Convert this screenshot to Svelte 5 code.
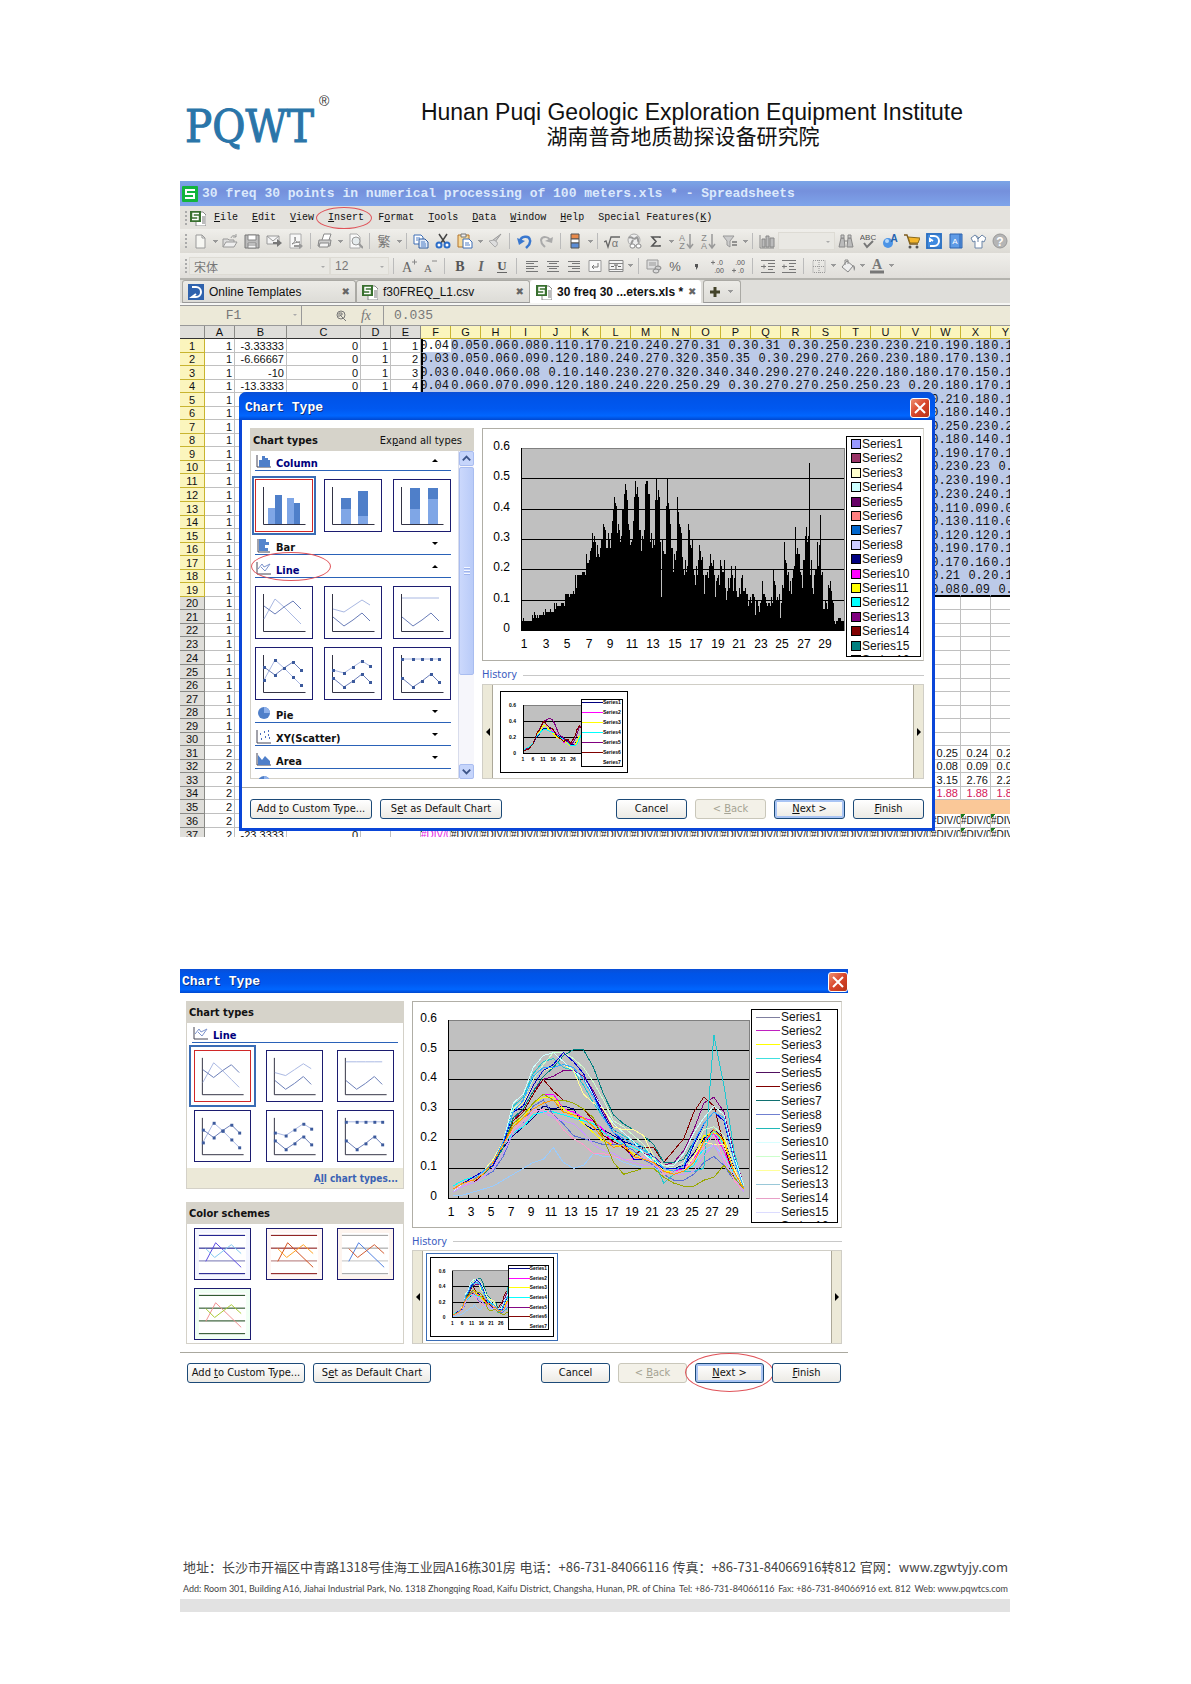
<script lang="ts">
  type ThumbKind = 'line' | 'stacked' | 'full';
  type Point = [number, number];

  const menus = [
    ['', 'F', 'ile'],
    ['', 'E', 'dit'],
    ['', 'V', 'iew'],
    ['', 'I', 'nsert'],
    ['F', 'o', 'rmat'],
    ['', 'T', 'ools'],
    ['', 'D', 'ata'],
    ['', 'W', 'indow'],
    ['', 'H', 'elp'],
    ['Special Features(', 'K', ')']
  ];

  // 'sep' draws a divider, 'drop' a small arrow, 'combo' an empty drop-down
  const standardBar = [
    'new', 'drop', 'open', 'save', 'mail', 'pdf', 'sep', 'print', 'drop', 'preview', 'sep',
    'convert', 'drop', 'sep', 'copy', 'cut', 'paste', 'drop', 'brush', 'sep', 'undo', 'redo', 'sep',
    'split', 'drop', 'sep', 'root', 'globe', 'sum', 'drop', 'asc', 'desc', 'filter', 'drop', 'sep',
    'chart', 'combo', 'find', 'spell', 'ball', 'cart', 'docer', 'book', 'shirt', 'help'
  ];
  const formatBar = [
    'sep', 'grow', 'shrink', 'sep', 'bold', 'italic', 'underline', 'sep',
    'left', 'center', 'right', 'wrap', 'merge', 'drop', 'sep',
    'currency', 'percent', 'comma', 'incdec', 'decdec', 'sep', 'outdent', 'indent', 'sep',
    'borders', 'drop', 'fill', 'drop', 'color', 'drop'
  ];

  const icons: Record<string, string> = {
    new: '<path d="M4 2h6l3 3v10H4z" fill="#f6f6f2" stroke="#999"/><path d="M10 2v3h3" fill="none" stroke="#999"/>',
    open: '<path d="M1 14V6h5l1 1h5v2" fill="#ddd" stroke="#999"/><path d="M1 14l3-5h11l-3 5z" fill="#eee" stroke="#999"/><path d="M9 5c1-3 4-3 5-1m0-3v3h-3" fill="none" stroke="#999"/>',
    save: '<path d="M1 2h14v13H1z" fill="#bbb" stroke="#777"/><path d="M4 2h8v5H4z" fill="#fff" stroke="#888"/><path d="M4 10h8v5H4zM4 12h8" fill="#f4f4f4" stroke="#888"/>',
    mail: '<path d="M1 3h12v8H1z" fill="#f4f4f4" stroke="#999"/><path d="M1 3l6 5 6-5" fill="none" stroke="#999"/><path d="M7 9h4V6l5 4-5 4v-3H7z" fill="#777"/>',
    pdf: '<path d="M2 1h11v14H2z" fill="#f8f8f8" stroke="#aaa"/><path d="M4 11c3-2 4-5 3-7-1 4 2 6 5 5-3 0-6 1-8 2z" fill="none" stroke="#888"/><path d="M6 12h5v-2l4 3-4 3v-2H6z" fill="#999"/>',
    print: '<path d="M5 7l2-6h7l-2 6" fill="#fff" stroke="#888"/><path d="M2 7h12l-1 6H1z" fill="#ccc" stroke="#888"/><path d="M3 10h9l-1 4H2z" fill="#f4f4f4" stroke="#888"/>',
    preview: '<path d="M3 1h7l3 3v11H3z" fill="#fafafa" stroke="#aaa"/><circle cx="9" cy="8" r="4" fill="#e6ecee" stroke="#999"/><path d="M12 11l4 4" stroke="#999" stroke-width="2"/>',
    convert: '<text x="8" y="13" font-size="13" fill="#777" text-anchor="middle">繁</text>',
    copy: '<path d="M1 2h7l2 2v7H1z" fill="#fff" stroke="#3f6fb5"/><path d="M6 6h6l3 3v6H6z" fill="#dfe9f8" stroke="#2f5ca0"/><path d="M8 9h4M8 11h5M8 13h5M3 5h4M3 7h2" stroke="#4f7fc5"/>',
    cut: '<path d="M4 1l6 9M12 1L6 10" stroke="#444" stroke-width="1.5"/><circle cx="4" cy="12" r="2.500" fill="#fff" stroke="#2c6dc8" stroke-width="2"/><circle cx="12" cy="12" r="2.500" fill="#fff" stroke="#2c6dc8" stroke-width="2"/>',
    paste: '<path d="M1 2h11v12H1z" fill="#f6d99a" stroke="#b3742a"/><path d="M4 1h5v3H4z" fill="#eee" stroke="#777"/><path d="M6 6h6l3 3v6H6z" fill="#fff" stroke="#3f6fb5"/><path d="M8 10h4M8 12h5" stroke="#4f7fc5"/>',
    brush: '<path d="M14 1l-6 8-2-2z" fill="#ccc" stroke="#999"/><path d="M2 8l6 6c2-1 3-3 2-5L7 7z" fill="#ddd" stroke="#aaa"/>',
    undo: '<path d="M4 8c1-5 9-6 10-1 1 4-2 6-4 8" fill="none" stroke="#3a78cf" stroke-width="2.500"/><path d="M1 5l8 3-6 4z" fill="#3a78cf"/>',
    redo: '<path d="M12 8C11 3 4 3 3 7c0 4 2 5 4 7" fill="none" stroke="#aaa" stroke-width="2"/><path d="M15 4l-8 4 7 2z" fill="#aaa"/>',
    split: '<path d="M4 1h8v5H4z" fill="#e88a4a" stroke="#555"/><path d="M4 6h8v4H4z" fill="#fff" stroke="#555"/><path d="M4 10h8v5H4z" fill="#5d8ed6" stroke="#555"/>',
    root: '<path d="M0 9l2-1 2 6 3-10h9" fill="none" stroke="#666" stroke-width="1.300"/><text x="11" y="14" font-size="11" fill="#777" text-anchor="middle">α</text>',
    globe: '<circle cx="8" cy="7" r="6" fill="#eee" stroke="#aaa"/><path d="M3 5c3-3 4 3 7 0s1 4 3 4M5 11l2-4" fill="none" stroke="#999" stroke-width="2"/><rect x="4" y="11" width="5" height="4" rx="2" fill="#fff" stroke="#888"/><rect x="10" y="11" width="5" height="4" rx="2" fill="#fff" stroke="#888"/>',
    sum: '<path d="M12 5V4H4l4 4.500L4 13h8v-1" fill="none" stroke="#555" stroke-width="1.600"/>',
    asc: '<text x="4" y="8" font-size="9" fill="#888" text-anchor="middle">A</text><text x="4" y="16" font-size="9" fill="#888" text-anchor="middle">Z</text><path d="M12 1v13M9 11l3 4 3-4" fill="none" stroke="#999" stroke-width="1.500"/>',
    desc: '<text x="4" y="8" font-size="9" fill="#888" text-anchor="middle">Z</text><text x="4" y="16" font-size="9" fill="#888" text-anchor="middle">A</text><path d="M12 1v13M9 11l3 4 3-4" fill="none" stroke="#999" stroke-width="1.500"/>',
    filter: '<path d="M1 3h11L8 8v6l-3-2V8z" fill="#ccc" stroke="#999"/><path d="M10 9h5M10 12h5" stroke="#777" stroke-width="1.500"/>',
    chart: '<path d="M1 2v13h14" fill="none" stroke="#888"/><path d="M3 6h3v8H3zM7 3h3v11H7zM11 5h4v9h-4z" fill="#bbb" stroke="#888"/>',
    find: '<path d="M3 5h3l1 9H1zM10 5h3l2 9H9z" fill="#bbb" stroke="#888"/><path d="M3 2h3v3H3zM10 2h3v3h-3zM6 8h4" fill="#ccc" stroke="#888"/>',
    spell: '<text x="8" y="7" font-size="8" fill="#555" text-anchor="middle">ABC</text><path d="M4 10l3 4 6-6" fill="none" stroke="#777" stroke-width="2"/>',
    ball: '<circle cx="6" cy="10" r="5" fill="#4c94e6"/><circle cx="5" cy="8" r="2" fill="#b6d8fb"/><text x="12" y="9" font-size="10" font-weight="bold" fill="#2563b0" text-anchor="middle">A</text>',
    cart: '<path d="M0 2h3l3 9h8" fill="none" stroke="#7c5a1c" stroke-width="1.300"/><path d="M4 4l12 1-2 5H6z" fill="#f4b62c" stroke="#8a6a1c"/><circle cx="6" cy="14" r="1.500" fill="#555"/><circle cx="13" cy="14" r="1.500" fill="#555"/>',
    docer: '<rect x="0" y="0" width="16" height="16" fill="#3f8ae0"/><rect x="1" y="1" width="14" height="14" fill="none" stroke="#2a62a8"/><path d="M4 3h4a5 5 0 0 1 0 10H4M4 9V6l3 2" fill="none" stroke="#fff" stroke-width="2"/>',
    book: '<path d="M2 1h12v14H2z" fill="#5f9be6" stroke="#2d62ae"/><path d="M12 1v14" stroke="#2d62ae"/><text x="7" y="11" font-size="8" fill="#fff" text-anchor="middle">A</text>',
    shirt: '<path d="M5 2L1 5l2 4 2-1v7h7V8l2 1 2-4-4-3-3 3z" fill="#fff" stroke="#6c86a8"/><path d="M8 5v4M6 3l2 3 3-3" fill="none" stroke="#6c86a8"/>',
    help: '<circle cx="8" cy="8" r="7" fill="#b5b5b5" stroke="#999"/><text x="8" y="13" font-size="12" font-weight="bold" fill="#fff" text-anchor="middle">?</text>',
    grow: '<text x="6" y="14" font-size="14" class="serif" fill="#666" text-anchor="middle">A</text><path d="M11 4h5M13.500 1.500v5" stroke="#888"/>',
    shrink: '<text x="6" y="14" font-size="11" class="serif" fill="#666" text-anchor="middle">A</text><path d="M10 3h5" stroke="#888"/>',
    bold: '<text x="8" y="13" font-size="14" font-weight="bold" class="serif" fill="#555" text-anchor="middle">B</text>',
    italic: '<text x="8" y="13" font-size="14" font-style="italic" font-weight="bold" class="serif" fill="#666" text-anchor="middle">I</text>',
    underline: '<text x="8" y="12" font-size="13" font-weight="bold" class="serif" fill="#555" text-anchor="middle">U</text><path d="M3 14.500h10" stroke="#666"/>',
    left: '<path d="M2 3.500h12M2 5.500h8M2 8.500h12M2 10.500h8M2 13.500h12" stroke="#777"/>',
    center: '<path d="M2 3.500h12M4 5.500h8M2 8.500h12M4 10.500h8M2 13.500h12" stroke="#777"/>',
    right: '<path d="M2 3.500h12M6 5.500h8M2 8.500h12M6 10.500h8M2 13.500h12" stroke="#777"/>',
    wrap: '<path d="M2 2.500h12v11H2z" fill="#f8f8f8" stroke="#999"/><path d="M11 5v4H5m2-2L5 9l2 2" fill="none" stroke="#777"/>',
    merge: '<path d="M1 2.500h14v11H1zM1 5.500h14M1 11.500h14" fill="#f4f4f4" stroke="#888"/><path d="M3 8.500h3M10 8.500h3M6 7h4M8 7v4" stroke="#666"/>',
    currency: '<path d="M1 2h11v9H1z" fill="#ddd" stroke="#999"/><path d="M3 5h7M3 7h7" stroke="#999"/><ellipse cx="12" cy="10" rx="3" ry="2" fill="#ccc" stroke="#888"/><ellipse cx="10" cy="13" rx="3" ry="2" fill="#ddd" stroke="#888"/>',
    percent: '<text x="8" y="13" font-size="13" fill="#666" text-anchor="middle">%</text>',
    comma: '<path d="M7 6h3v3l-2 3v-3H7z" fill="#555"/>',
    incdec: '<text x="11" y="7" font-size="7" fill="#555" text-anchor="middle">.0</text><text x="10" y="15" font-size="7" fill="#555" text-anchor="middle">.00</text><path d="M2 4.500h4M4 2.500v4" stroke="#777"/>',
    decdec: '<text x="10" y="7" font-size="7" fill="#555" text-anchor="middle">.00</text><text x="11" y="15" font-size="7" fill="#555" text-anchor="middle">.0</text><path d="M2 12.500h4M4 10.500v4" stroke="#777"/>',
    outdent: '<path d="M1 2.500h14M8 5.500h7M8 8.500h7M8 11.500h5M1 14.500h14M1 8.500h5M4 6.500v4" stroke="#777"/>',
    indent: '<path d="M1 2.500h14M8 5.500h7M8 8.500h5M8 11.500h7M1 14.500h14M1 8.500h5M3 6.500v4" stroke="#777"/>',
    borders: '<path d="M2 2.500h12v12H2zM8 2v13M2 8.500h12" fill="none" stroke="#999" stroke-dasharray="1 1"/>',
    fill: '<path d="M7 3l6 5-5 6-6-5z" fill="#eee" stroke="#888"/><path d="M5 7V2h3v4" fill="none" stroke="#888"/><path d="M13 7c3 1 2 5 1 6z" fill="#888"/>',
    color: '<text x="8" y="11" font-size="14" font-weight="bold" class="serif" fill="#777" text-anchor="middle">A</text><path d="M1 14h14" stroke="#777" stroke-width="3"/>',
    sheet: '<path d="M6 2h7l3 3v11H6z" fill="#fff" stroke="#888"/><path d="M12 7h3M12 9h3M12 11h3M12 13h3" stroke="#777"/><rect x="0" y="1" width="11" height="11" fill="#39702f"/><path d="M9 3.500H3v3h5v3H2" fill="none" stroke="#fff" stroke-width="1.500"/>',
    template: '<rect width="16" height="16" fill="#2f62ad"/><path d="M4 3h4a5 5 0 0 1 0 10H4l4-3" fill="none" stroke="#fff" stroke-width="2"/>',
    column: '<path d="M1 1v12h14" fill="none" stroke="#445"/><path d="M3 6h3v7H3zM6 2h3v11H6zM9 4h3v9H9zM12 6h2v7h-2z" fill="#4f7fc9"/>',
    bar: '<path d="M2 1v13h12" fill="none" stroke="#445"/><path d="M3 1h7v3H3zM3 4h10v3H3zM3 7h6v3H3zM3 10h9v3H3z" fill="#5585cc"/>',
    line: '<path d="M1 1v12h14" fill="none" stroke="#445"/><path d="M2 8l4-5 2 3 6-3-5 7-4-4" fill="none" stroke="#7c93cc"/>',
    pie: '<circle cx="8" cy="7" r="6" fill="#4f7fc9"/><path d="M8 7V1a6 6 0 0 1 6 6z" fill="#8fb2ec"/>',
    scatter: '<path d="M1 1v13h14" fill="none" stroke="#445"/><path d="M4 5h1M8 3h1M12 2h1M5 10h1M9 8h1M13 9h1M12 6h1" stroke="#4f6fc0" stroke-width="2"/>',
    area: '<path d="M1 1v12h14" fill="none" stroke="#445"/><path d="M2 13V3l4 5 3-4 5 5v4z" fill="#4f7fc9"/>'
  };

  const letters = 'FGHIJKLMNOPQRSTUVWXY'.split('');
  const topRows = [
    '.04 .05 .06 .08 .11 .17 .21 .24 .27 .31 .3 .31 .3 .25 .23 .23 .21 .19 .18 .17',
    '.03 .05 .06 .09 .12 .18 .24 .27 .32 .35 .35 .3 .29 .27 .26 .23 .18 .17 .13 .12',
    '.03 .04 .06 .08 .1 .14 .23 .27 .32 .34 .34 .29 .27 .24 .22 .18 .18 .17 .15 .14',
    '.04 .06 .07 .09 .12 .18 .24 .22 .25 .29 .3 .27 .27 .25 .25 .23 .2 .18 .17 .16'
  ];
  const sideCells = [
    '.21 .18 .15', '.18 .14 .12', '.25 .23 .21', '.18 .14 .12', '.19 .17 .14', '.23 .23 .2', '.23 .19 .17',
    '.23 .24 .19', '.11 .09 .08', '.13 .11 .09', '.12 .12 .11', '.19 .17 .15', '.17 .16 .13', '.21 .2 .17', '.08 .09 .1'
  ];
  const stats = ['0.25 0.24 0.23', '0.08 0.09 0.08', '3.15 2.76 2.21', '1.88 1.88 1.88'];
  const bValues = ['-3.33333', '-6.66667', '-10', '-13.3333'];

  function rowCells(n: number): string[] {
    if (n <= 4) return topRows[n - 1].split(' ').map((v) => '0' + v);
    const blank = Array(17).fill('');
    if (n === 36) return [...blank, ...Array(3).fill('#DIV/0')];
    if (n === 37) return letters.map(() => '#DIV/0');
    if (n <= 19) return [...blank, ...sideCells[n - 5].split(' ').map((v) => '0' + v)];
    if (n >= 31 && n <= 34) return [...blank, ...stats[n - 31].split(' ')];
    return Array(20).fill('');
  }

  const rows = Array.from({ length: 37 }, (_, i) => {
    const n = i + 1;
    return {
      n,
      a: n > 30 ? '2' : '1',
      b: n <= 4 ? bValues[i] : n === 37 ? '-23.3333' : '',
      c: n <= 4 || n === 37 ? '0' : '',
      d: n <= 4 ? '1' : '',
      e: n <= 4 ? String(n) : '',
      cells: rowCells(n)
    };
  });

  // values are hundredths
  const series = [
    { color: '#000080', v: [3, 5, 6, 8, 11, 17, 21, 24, 27, 31, 30, 31, 30, 25, 23, 23, 21, 19, 18, 17, 14, 11, 10, 11, 15, 20, 23, 20, 10, 3] },
    { color: '#ff00ff', v: [3, 5, 6, 9, 12, 18, 25, 27, 32, 35, 35, 30, 29, 27, 26, 23, 18, 18, 13, 13, 12, 10, 9, 10, 13, 19, 22, 16, 8, 3] },
    { color: '#ffff00', v: [3, 4, 6, 8, 12, 18, 25, 27, 32, 34, 34, 30, 28, 25, 22, 19, 18, 17, 15, 13, 12, 9, 9, 9, 14, 21, 22, 20, 9, 3] },
    { color: '#00ffff', v: [4, 6, 7, 9, 12, 18, 22, 24, 28, 29, 29, 28, 27, 26, 25, 22, 20, 18, 17, 15, 13, 10, 9, 9, 11, 17, 23, 18, 8, 3] },
    { color: '#800080', v: [3, 5, 6, 8, 11, 18, 26, 30, 36, 40, 41, 43, 43, 41, 36, 29, 23, 21, 19, 15, 14, 11, 12, 16, 23, 32, 34, 29, 15, 4] },
    { color: '#800000', v: [3, 4, 5, 8, 11, 18, 26, 29, 35, 40, 36, 33, 32, 30, 26, 21, 19, 17, 14, 17, 17, 12, 16, 20, 29, 34, 31, 18, 7, 2] },
    { color: '#008080', v: [3, 5, 6, 8, 11, 17, 27, 30, 36, 41, 44, 48, 50, 50, 44, 35, 28, 25, 23, 21, 18, 12, 12, 13, 19, 25, 29, 26, 14, 4] },
    { color: '#5a6fd8', v: [2, 4, 5, 7, 9, 14, 22, 25, 31, 33, 28, 25, 21, 20, 19, 18, 18, 18, 16, 13, 11, 8, 6, 6, 8, 12, 14, 11, 6, 2] },
    { color: '#20c8d0', v: [3, 5, 7, 9, 12, 19, 31, 34, 42, 46, 47, 44, 43, 38, 32, 27, 23, 21, 19, 17, 13, 5, 8, 9, 9, 10, 55, 38, 16, 3] },
    { color: '#ccffff', v: [2, 5, 6, 8, 12, 19, 32, 35, 44, 48, 49, 46, 43, 40, 35, 30, 25, 22, 19, 15, 12, 11, 11, 15, 22, 27, 31, 28, 14, 4] },
    { color: '#ccffcc', v: [3, 4, 6, 8, 12, 18, 30, 33, 40, 45, 49, 49, 47, 44, 39, 33, 26, 24, 21, 18, 13, 11, 10, 12, 17, 23, 24, 21, 12, 4] },
    { color: '#ffff99', v: [3, 5, 6, 9, 13, 19, 29, 32, 38, 43, 44, 45, 43, 35, 32, 30, 24, 23, 23, 21, 14, 9, 8, 9, 14, 19, 18, 18, 10, 3] },
    { color: '#99ccff', v: [1, 1, 2, 3, 4, 6, 8, 10, 12, 13, 17, 12, 10, 11, 15, 14, 14, 12, 11, 10, 10, 9, 8, 9, 12, 16, 18, 14, 8, 3] },
    { color: '#ff99cc', v: [3, 4, 6, 8, 12, 18, 23, 26, 29, 30, 28, 23, 20, 18, 15, 15, 14, 13, 13, 14, 12, 8, 9, 9, 13, 17, 21, 13, 6, 2] },
    { color: '#cc99ff', v: [2, 4, 5, 7, 10, 15, 22, 25, 30, 29, 27, 26, 25, 22, 18, 16, 15, 13, 12, 11, 11, 9, 8, 8, 9, 14, 18, 12, 7, 2] },
    { color: '#99a800', v: [3, 5, 6, 9, 12, 18, 25, 28, 32, 35, 33, 33, 32, 30, 27, 20, 12, 8, 9, 10, 10, 7, 5, 4, 4, 6, 7, 11, 7, 3] },
    { color: '#0000d0', v: [3, 5, 7, 9, 11, 18, 29, 31, 38, 43, 45, 49, 46, 42, 35, 28, 22, 19, 13, 13, 12, 10, 10, 10, 18, 25, 29, 26, 13, 3] },
    { color: '#33aaff', v: [3, 5, 6, 9, 12, 19, 29, 33, 41, 44, 44, 45, 44, 40, 34, 27, 22, 20, 18, 16, 14, 10, 9, 11, 19, 25, 29, 27, 13, 3] },
    { color: '#ff9900', v: [3, 5, 6, 8, 12, 18, 24, 27, 30, 32, 33, 29, 28, 27, 24, 20, 17, 18, 14, 13, 12, 9, 8, 9, 12, 19, 23, 19, 9, 3] }
  ];

  const legendColors = [
    '#9999ff', '#993366', '#ffffcc', '#ccffff', '#660066', '#ff8080', '#0066cc', '#ccccff',
    '#000080', '#ff00ff', '#ffff00', '#00ffff', '#800080', '#800000', '#008080', '#0000ff'
  ];
  const lineColors = [
    '#7f7f9f', '#c020c0', '#ffff00', '#40e0e0', '#501060', '#800000', '#107070', '#7080d0',
    '#20b8b8', '#d8ffff', '#ccffcc', '#ffff99', '#99c8d8', '#e8a0c8', '#dcdcff', '#ffcc99'
  ];

  const ticks = [6, 5, 4, 3, 2, 1, 0];
  const odd = Array.from({ length: 15 }, (_, i) => i * 2 + 1);

  function polyline(v: number[], x: number, y: number, w: number, h: number) {
    return v.map((n, i) => `${x + ((i + 0.5) * w) / v.length},${y + h - (n / 60) * h}`).join(' ');
  }

  function columns(x: number, y: number, w: number, h: number) {
    const step = w / 30;
    const bar = step / series.length;
    // lowest series first, so that each cluster climbs to one peak
    const order = [12, 15, 7, 14, 3, 0, 13, 2, 5, 4, 6, 10, 9, 16, 8, 17, 11, 1, 18];
    let d = '';
    for (let c = 0; c < 30; c++) {
      order.forEach((s, k) => {
        const left = x + c * step + k * bar;
        d += `M${left} ${y + h}V${y + h - (series[s].v[c] / 60) * h}h1V${y + h}z`;
      });
    }
    return d;
  }

  const upper: Record<ThumbKind, Point[]> = {
    line: [[8, 32], [19, 12], [28, 20], [37, 29], [45, 37]],
    stacked: [[8, 22], [19, 25], [28, 19], [37, 13], [45, 18]],
    full: [[8, 11], [19, 11], [28, 11], [37, 11], [45, 11]]
  };
  const lower: Record<ThumbKind, Point[]> = {
    line: [[8, 19], [19, 27], [28, 20], [37, 14], [45, 22]],
    stacked: [[8, 30], [19, 39], [28, 33], [37, 26], [45, 34]],
    full: [[8, 30], [19, 39], [28, 33], [37, 26], [45, 34]]
  };
  const kinds: ThumbKind[] = ['line', 'stacked', 'full'];

  const schemes = [
    { name: 'Blue', grid: ['#000080', '#000080', '#7070b0', '#000080'], a: '#5a4ae0', b: '#80c8f0', bg: '#f4f6ff' },
    { name: 'Red', grid: ['#800000', '#800000', '#b07070', '#800000'], a: '#d05020', b: '#ffa020', bg: '#fff6f4' },
    { name: 'Gray', grid: ['#999999', '#999999', '#c0c0c0', '#999999'], a: '#5080e0', b: '#d05a30', bg: '#fdf4ee' },
    { name: 'Green', grid: ['#104010', '#104010', '#104010', '#104010'], a: '#f09090', b: '#a8c830', bg: '#f0fff4' }
  ];
</script>

{#snippet icon(name: string)}
  <svg class="icon" viewBox="0 0 16 16" aria-hidden="true">{@html icons[name]}</svg>
{/snippet}

{#snippet tools(items: string[])}
  {#each items as item}
    {#if item === 'sep'}
      <span class="sep"></span>
    {:else if item === 'drop'}
      <span class="drop"></span>
    {:else if item === 'combo'}
      <span class="pick zoom"><select aria-label="Zoom"><option></option></select></span>
    {:else}
      <button class="tool" aria-label={item}>{@render icon(item)}</button>
    {/if}
  {/each}
{/snippet}

{#snippet lineThumb(kind: ThumbKind, markers: boolean, selected: boolean)}
  <button class="thumb" class:selected aria-label={kind}>
    <svg viewBox="0 0 56 51">
      <path d="M7.500 7v37.500h42" fill="none" stroke="#334" />
      <polyline points={upper[kind].join(' ')} fill="none" stroke="#a9b8e2" />
      <polyline points={lower[kind].join(' ')} fill="none" stroke="#6a7db8" />
      {#if markers}
        {#each [...upper[kind], ...lower[kind]] as [x, y]}
          <rect x={x - 1} y={y - 1} width="3" height="3" fill="#3c5a9c" />
        {/each}
      {/if}
    </svg>
  </button>
{/snippet}

{#snippet category(name: string, glyph: string, open: boolean, circled: boolean)}
  <h3 class="category" class:open>
    {@render icon(glyph)}
    <span>{name}</span>
    <i class="caret" class:up={open}></i>
    {#if circled}<span class="ring ring-line"></span>{/if}
  </h3>
{/snippet}

{#snippet titleBar()}
  <header class="dialog-title">
    <h2>Chart Type</h2>
    <button class="close" aria-label="Close">
      <svg viewBox="0 0 18 18"><path d="M4 4l10 10M14 4L4 14" stroke="#fff" stroke-width="2" /></svg>
    </button>
  </header>
{/snippet}

{#snippet legend(colors: string[], swatch: boolean)}
  <ul class="legend" class:lines={!swatch}>
    {#each colors as color, i}
      <li><i style="background: {color}"></i>Series{i + 1}</li>
    {/each}
  </ul>
{/snippet}

{#snippet axes(x: number, y: number, w: number, h: number)}
  <rect {x} {y} width={w} height={h} fill="#c0c0c0" stroke="#808080" />
  {#each ticks as t}
    <path d="M{x} {y + h - Math.round((t * h) / 6)}h{w}" stroke={t === 6 ? '#808080' : '#000'} />
    <text x={x - 11} y={y + h + 2 - Math.round((t * h) / 6)} text-anchor="end">{t ? `0.${t}` : '0'}</text>
  {/each}
  {#each odd as n}
    <text x={x + Math.round(((n - 1) * w) / 30) + 3} y={y + h + 18} text-anchor="middle">{n}</text>
  {/each}
  <path d="M{x} {y}v{h}" stroke="#000" />
{/snippet}

{#snippet miniChart(count: number)}
  <svg class="mini" viewBox="0 0 126 80" aria-hidden="true">
    <rect x="22" y="13" width="58" height="48" fill="#c0c0c0" stroke="#808080" />
    <path d="M22 29.500h58M22 45.500h58M22 61.500h58M22.500 13v48" stroke="#000" />
    {#each series.slice(0, count) as s}
      <polyline points={polyline(s.v, 22, 13, 66, 48)} fill="none" stroke={s.color} />
    {/each}
    {#each [6, 4, 2, 0] as t, i}
      <text x="15" y={15 + i * 16} text-anchor="end">{t ? `0.${t}` : '0'}</text>
    {/each}
    {#each [1, 6, 11, 16, 21, 26] as n, i}
      <text x={22 + i * 10} y="69" text-anchor="middle">{n}</text>
    {/each}
    <rect x="80" y="7" width="41" height="67" fill="#fff" stroke="#000" />
    {#each lineColors.slice(0, 7) as _, i}
      {#if i < 6}<path d="M81 {10.5 + i * 10}h21" stroke={series[i].color} />{/if}
      <text x="102" y={12 + i * 10}>Series{i + 1}</text>
    {/each}
  </svg>
{/snippet}

{#snippet history(framed: boolean, count: number)}
  <div class="history-label">History</div>
  <div class="history">
    <button class="scroll prev" aria-label="Previous"></button>
    <div class="history-item" class:framed>{@render miniChart(count)}</div>
    <button class="scroll next" aria-label="Next"></button>
  </div>
{/snippet}

{#snippet actions(circled: boolean)}
  <footer class="actions">
    <button class="push wide">Add <u>t</u>o Custom Type...</button>
    <button class="push wide">S<u>e</u>t as Default Chart</button>
    <span class="spacer"></span>
    <button class="push">Cancel</button>
    <button class="push" disabled>&lt; <u>B</u>ack</button>
    <button class="push default">
      <u>N</u>ext &gt;{#if circled}<span class="ring ring-next"></span>{/if}
    </button>
    <button class="push"><u>F</u>inish</button>
  </footer>
{/snippet}

<div class="page">
  <header class="letterhead">
    <div class="logo">PQWT<sup>®</sup></div>
    <div class="institute">
      <h1>Hunan Puqi Geologic Exploration Equipment Institute</h1>
      <p lang="zh">湖南普奇地质勘探设备研究院</p>
    </div>
  </header>

  <section class="spreadsheet">
    <div class="titlebar">
      <svg class="app" viewBox="0 0 16 16" aria-hidden="true">
        <rect width="16" height="16" rx="1" fill="#12b53c" />
        <path d="M13 4H4v4h8v4H3" fill="none" stroke="#fff" stroke-width="2" />
      </svg>
      <span>30 freq 30 points in numerical processing of 100 meters.xls * - Spreadsheets</span>
    </div>

    <nav class="menubar">
      <span class="grip"></span>
      {@render icon('sheet')}
      {#each menus as [before, key, after]}
        <button class="menu">
          {before}<u>{key}</u>{after}{#if after === 'nsert'}<span class="ring ring-menu"></span>{/if}
        </button>
      {/each}
    </nav>

    <div class="toolbar">
      <span class="grip"></span>
      {@render tools(standardBar)}
    </div>

    <div class="toolbar format">
      <span class="grip"></span>
      <span class="pick font"><select aria-label="Font"><option>宋体</option></select></span>
      <span class="pick size"><select aria-label="Font size"><option>12</option></select></span>
      {@render tools(formatBar)}
    </div>

    <div class="tabs">
      <button class="tab">{@render icon('template')}<span>Online Templates</span><b>✖</b></button>
      <button class="tab">{@render icon('sheet')}<span>f30FREQ_L1.csv</span><b>✖</b></button>
      <button class="tab active">{@render icon('sheet')}<span>30 freq 30 ...eters.xls *</span><b>✖</b></button>
      <button class="tab add" aria-label="New tab">
        <svg viewBox="0 0 12 12"><path d="M6 1v10M1 6h10" stroke="#44442a" stroke-width="3" /></svg>
        <i class="drop"></i>
      </button>
    </div>

    <div class="formula">
      <span class="pick name"><input aria-label="Cell" value="F1" /></span>
      <span class="fx">
        <svg viewBox="0 0 12 12" aria-hidden="true">
          <circle cx="6" cy="5" r="4" fill="none" stroke="#777" /><path d="M4 7V3h3v2H5l3 3 3 3" fill="none" stroke="#777" />
        </svg>
        <em>fx</em>
      </span>
      <input class="value" aria-label="Formula" value="0.035" />
    </div>

    <div class="grid">
      <table>
        <colgroup>
          <col class="w-head" /><col class="w-cell" /><col class="w-b" /><col class="w-c" />
          <col span="22" class="w-cell" />
        </colgroup>
        <thead>
          <tr>
            <th></th>
            {#each ['A', 'B', 'C', 'D', 'E'] as l}<th>{l}</th>{/each}
            {#each letters as l}<th class="hot">{l}</th>{/each}
          </tr>
        </thead>
        <tbody>
          {#each rows as row}
            <tr class:sel={row.n <= 19} class:last={row.n === 19} class:red={row.n === 34} class:orange={row.n === 35} class:err={row.n >= 36}>
              <th class:hot={row.n <= 19}>{row.n}</th>
              <td>{row.a}</td>
              <td>{row.b}</td>
              <td>{row.c}</td>
              <td>{row.d}</td>
              <td>{row.e}</td>
              {#each row.cells as cell}<td class="num">{cell}</td>{/each}
            </tr>
          {/each}
        </tbody>
      </table>
    </div>

    <section class="dialog floating">
      {@render titleBar()}
      <div class="body">
        <div class="panel">
          <div class="panel-head"><b>Chart types</b><span>Ex<u>p</u>and all types</span></div>
          <div class="scroller">
            <div class="list">
              {@render category('Column', 'column', true, false)}
              <div class="thumbs">
                <button class="thumb selected" aria-label="Clustered column">
                  <svg viewBox="0 0 56 51">
                    <path d="M12 28h7v16h-7zM31 18h7v26h-7z" fill="#7fa6e6" />
                    <path d="M19 15h7v29h-7zM38 23h6v21h-6z" fill="#4f7fc9" />
                    <path d="M7.500 7v37.500h42" fill="none" stroke="#334" />
                  </svg>
                </button>
                <button class="thumb" aria-label="Stacked column">
                  <svg viewBox="0 0 56 51">
                    <path d="M16 29h10v15H16zM33 36h10v8H33z" fill="#7fa6e6" />
                    <path d="M16 18h10v11H16zM33 11h10v25H33z" fill="#4f7fc9" />
                    <path d="M7.500 7v37.500h42" fill="none" stroke="#334" />
                  </svg>
                </button>
                <button class="thumb" aria-label="Full column">
                  <svg viewBox="0 0 56 51">
                    <path d="M16 29h10v15H16zM34 19h10v25H34z" fill="#7fa6e6" />
                    <path d="M16 8h10v21H16zM34 8h10v11H34z" fill="#4f7fc9" />
                    <path d="M7.500 7v37.500h42" fill="none" stroke="#334" />
                  </svg>
                </button>
              </div>
              {@render category('Bar', 'bar', false, false)}
              {@render category('Line', 'line', true, true)}
              <div class="thumbs">
                {#each kinds as kind}{@render lineThumb(kind, false, false)}{/each}
                {#each kinds as kind}{@render lineThumb(kind, true, false)}{/each}
              </div>
              {@render category('Pie', 'pie', false, false)}
              {@render category('XY(Scatter)', 'scatter', false, false)}
              {@render category('Area', 'area', false, false)}
              <div class="category">{@render icon('pie')}</div>
            </div>
            <div class="track">
              <button aria-label="Scroll up"><svg viewBox="0 0 14 14"><path d="M3 9l4-4 4 4" fill="none" stroke="#3c5488" stroke-width="2" /></svg></button>
              <span class="handle"></span>
              <button aria-label="Scroll down"><svg viewBox="0 0 14 14"><path d="M3 5l4 4 4-4" fill="none" stroke="#3c5488" stroke-width="2" /></svg></button>
            </div>
          </div>
        </div>

        <div class="right">
          <div class="preview">
            <svg class="plot" viewBox="0 0 363 231" aria-label="Column chart">
              {@render axes(38, 19, 323, 182)}
              <path d={columns(38, 19, 323, 182)} fill="#000" />
            </svg>
            {@render legend(legendColors, true)}
          </div>
          {@render history(false, 6)}
        </div>
      </div>
      {@render actions(false)}
    </section>
  </section>

  <section class="dialog docked">
    {@render titleBar()}
    <div class="body">
      <div class="stack">
        <div class="panel">
          <div class="panel-head"><b>Chart types</b></div>
          <div class="list">
            <h3 class="category">{@render icon('line')}<span class="blue">Line</span></h3>
            <div class="thumbs">
              {#each kinds as kind}{@render lineThumb(kind, false, kind === 'line')}{/each}
              {#each kinds as kind}{@render lineThumb(kind, true, false)}{/each}
            </div>
          </div>
          <div class="more"><a href="#all">A<u>l</u>l chart types...</a></div>
        </div>
        <div class="panel">
          <div class="panel-head"><b>Color schemes</b></div>
          <div class="list schemes">
            <div class="thumbs">
              {#each schemes as s}
                <button class="thumb" aria-label={s.name}>
                  <svg viewBox="0 0 56 51">
                    <rect width="56" height="51" fill={s.bg} />
                    <rect x="4" y="4" width="48" height="43" fill="#fff" />
                    {#each s.grid as g, i}<path d="M4 {6.5 + i * 13}h47" stroke={g} />{/each}
                    <polyline points="11,33 21,14 47,39" fill="none" stroke={s.a} />
                    <polyline points="11,20 20,29 37,16 47,25" fill="none" stroke={s.b} />
                  </svg>
                </button>
              {/each}
            </div>
          </div>
        </div>
      </div>

      <div class="right">
        <div class="preview">
          <svg class="plot" viewBox="0 0 338 225" aria-label="Line chart">
            {@render axes(35, 18, 301, 178)}
            {#each odd as n}<path d="M{25 + n * 10} 193v3M{35 + n * 10} 193v3" stroke="#000" />{/each}
            {#each series as s}
              <polyline points={polyline(s.v, 35, 18, 301, 178)} fill="none" stroke={s.color} />
            {/each}
          </svg>
          {@render legend(lineColors, false)}
        </div>
        {@render history(true, 19)}
      </div>
    </div>
    {@render actions(true)}
  </section>

  <footer class="contact">
    <p class="zh" lang="zh">
      <span>地址：长沙市开福区中青路1318号佳海工业园A16栋301房</span>
      <span>电话：+86-731-84066116</span>
      <span>传真：+86-731-84066916转812</span>
      <span>官网：www.zgwtyjy.com</span>
    </p>
    <p class="en">
      <span>Add: Room 301, Building A16, Jiahai Industrial Park, No. 1318 Zhongqing Road, Kaifu District, Changsha, Hunan, PR. of China</span>
      <span>Tel: +86-731-84066116</span>
      <span>Fax: +86-731-84066916 ext. 812</span>
      <span>Web: www.pqwtcs.com</span>
    </p>
    <div class="strip"></div>
  </footer>
</div>

<style>
  :global(body) {
    background: #fff;
    color: #111;
    font-family: 'Liberation Sans', 'Noto Sans CJK SC', sans-serif;
  }
  .page {
    box-sizing: border-box;
    max-width: 1191px;
    margin: 0 auto;
    padding: 92px 181px 72px 180px;
  }
  .page :global(*) {
    box-sizing: border-box;
  }
  h1, h2, h3, p, ul {
    margin: 0;
    padding: 0;
  }
  button, input, select {
    margin: 0;
    padding: 0;
    border: 0;
    border-radius: 0;
    background: none;
    color: inherit;
    font: inherit;
    appearance: none;
  }
  svg {
    display: block;
    flex: none;
  }
  .icon {
    width: 16px;
    height: 16px;
  }
  .icon :global(.serif) {
    font-family: 'Liberation Serif', serif;
  }
  .ring {
    position: absolute;
    border: 1px solid #e0545a;
    border-radius: 50%;
    pointer-events: none;
  }

  /* letterhead */
  .letterhead {
    display: flex;
    align-items: flex-start;
    justify-content: space-between;
    height: 89px;
    padding: 0 47px 0 5px;
  }
  .logo {
    display: flex;
    align-items: flex-start;
    gap: 5px;
    color: #2a75a9;
    font: 45px/70px 'DejaVu Serif Condensed', 'DejaVu Serif', serif;
    -webkit-text-stroke: 1px #2a75a9;
  }
  .logo sup {
    color: #333;
    font: 14px/18px 'Liberation Sans', sans-serif;
    -webkit-text-stroke: 0;
  }
  .institute {
    padding-top: 8px;
    text-align: center;
  }
  .institute h1 {
    font-size: 23px;
    line-height: 24px;
    font-weight: 400;
    white-space: nowrap;
  }
  .institute p {
    padding-right: 18px;
    font: 21px/22px 'Noto Sans CJK SC', sans-serif;
  }

  /* spreadsheet window */
  .spreadsheet {
    position: relative;
    background: #e6e4df;
  }
  .titlebar {
    display: flex;
    align-items: center;
    gap: 4px;
    height: 25px;
    padding-left: 2px;
    overflow: hidden;
    background: linear-gradient(#7ba5e6, #7590dc 40%, #7ea4ea);
    color: #dbe9fc;
    font: bold 13px/25px 'Liberation Mono', monospace;
    white-space: nowrap;
  }
  .app {
    width: 16px;
    height: 16px;
  }
  .menubar {
    display: flex;
    align-items: center;
    height: 23px;
    background: #e4e2dd;
    font: 10px/22px 'Liberation Mono', monospace;
  }
  .menubar .icon {
    margin: 0 8px 0 1px;
  }
  .menu {
    position: relative;
    margin-right: 14px;
    white-space: nowrap;
  }
  .ring-menu {
    inset: 0 -8px 0 -12px;
  }
  .grip {
    flex: none;
    width: 9px;
    height: 14px;
    border-left: 2px dotted #aaa;
    border-right: 2px solid transparent;
    background: none;
    margin-left: 5px;
    margin-right: -5px;
  }
  .toolbar {
    --tool: 22px;
    --sep: 7px;
    display: flex;
    align-items: center;
    height: 24px;
    overflow: hidden;
    background: linear-gradient(#f0efeb, #dcdad4);
  }
  .toolbar.format {
    --tool: 21px;
    --sep: 9px;
    height: 25px;
    background: linear-gradient(#f0efeb, #e0deda);
  }
  .tool {
    display: flex;
    flex: none;
    justify-content: center;
    width: var(--tool);
  }
  .sep {
    flex: none;
    width: var(--sep);
    height: 16px;
    background: linear-gradient(#bbb, #bbb) center / 1px 100% no-repeat;
  }
  .drop {
    flex: none;
    width: 8px;
    height: 3px;
    background: conic-gradient(from 315deg at 50% 100%, #999 90deg, transparent 0) center / 5px 3px no-repeat;
  }
  .pick {
    position: relative;
    display: flex;
    flex: none;
    height: 18px;
    border: 1px solid #dddbd4;
    background: #e9e8e3;
    color: #777;
    font-size: 12px;
  }
  .pick::after {
    content: '';
    position: absolute;
    top: 8px;
    right: 4px;
    border: 2px solid transparent;
    border-top-color: #aaa;
  }
  .pick select, .pick input {
    width: 100%;
    padding-left: 4px;
  }
  .zoom {
    width: 57px;
  }
  .font {
    width: 141px;
    font-family: 'Noto Sans CJK SC', sans-serif;
  }
  .size {
    width: 59px;
  }
  .tabs {
    display: flex;
    height: 27px;
    padding-left: 2px;
    border-top: 2px solid #b4b3ae;
    border-bottom: 2px solid #f6f6f4;
    background: #dfdeda;
  }
  .tab {
    display: flex;
    align-items: center;
    gap: 5px;
    width: 174px;
    padding: 0 5px;
    border: 1px solid #aaa9a4;
    border-bottom-color: #999;
    border-radius: 3px 3px 0 0;
    background: linear-gradient(#ecebe7, #dddcd7);
    font-size: 12px;
    text-align: left;
    white-space: nowrap;
  }
  .tab span {
    flex: 1;
  }
  .tab b {
    color: #666;
    font: 10px/12px 'DejaVu Sans', sans-serif;
  }
  .tab.active {
    width: 171px;
    border-color: #fff;
    background: #fff;
    font-weight: 700;
  }
  .tab.add {
    width: 38px;
    margin-left: 2px;
  }
  .tab.add svg {
    width: 12px;
    height: 12px;
  }
  .formula {
    display: flex;
    height: 21px;
    border-top: 1px solid #999;
    border-bottom: 1px solid #999;
    background: #ece9d8;
    color: #777;
    font: 13px/18px 'Liberation Mono', monospace;
  }
  .formula .pick {
    width: 122px;
    height: auto;
    border: 0;
    border-right: 1px solid #999;
    background: none;
    font: inherit;
  }
  .formula .pick input {
    padding-right: 18px;
    text-align: center;
  }
  .fx {
    display: flex;
    align-items: center;
    justify-content: flex-end;
    gap: 14px;
    width: 82px;
    padding-right: 12px;
    border-right: 1px solid #999;
  }
  .fx svg {
    width: 12px;
    height: 12px;
  }
  .fx em {
    font: italic 14px/16px 'Liberation Serif', serif;
  }
  .value {
    flex: 1;
    padding-left: 10px;
  }

  .grid {
    height: 511px;
    overflow: hidden;
    background: #fff;
  }
  table {
    width: 841px;
    border-spacing: 0;
    table-layout: fixed;
    font-size: 11px;
    line-height: 12px;
  }
  .w-head {
    width: 25px;
  }
  .w-cell {
    width: 30px;
  }
  .w-b {
    width: 52px;
  }
  .w-c {
    width: 74px;
  }
  th, td {
    height: 13px;
    padding: 0;
    border-right: 1px solid #c0c0c0;
    border-bottom: 1px solid #c0c0c0;
    white-space: nowrap;
  }
  tbody tr:nth-child(odd) > *, tbody tr:nth-child(12n) > * {
    height: 14px;
  }
  th {
    border-color: #8a8a86;
    background: #dfdeda;
    font-weight: 400;
  }
  th.hot {
    border-color: #c8b430;
    background: #fbf5bd;
  }
  thead th {
    border-bottom-color: #333;
  }
  td {
    padding-right: 2px;
    text-align: right;
  }
  .sel .num {
    padding: 1px 0 0;
    border-color: #bccae8;
    background: #bccae8;
    font: 12px/11px 'Liberation Mono', monospace;
  }
  .sel td:nth-child(7) {
    border-left: 2px solid #000;
    direction: rtl;
    overflow: hidden;
  }
  tr:first-child.sel td:nth-child(7) {
    border-color: #000 #fff #bccae8 #000;
    background: #fff;
  }
  .last .num {
    border-bottom: 2px solid #000;
    line-height: 10px;
  }
  .red .num {
    color: #d4145a;
  }
  .orange .num {
    border-color: #fac898;
    background: #fac898;
  }
  .err .num {
    padding: 0;
    overflow: hidden;
    background: linear-gradient(135deg, #1a7a1a 3px, transparent 3px);
    font-size: 10px;
    text-align: left;
  }
  .err td:nth-child(7) {
    color: #e020e0;
  }

  /* dialogs */
  .dialog {
    background: #fff;
    font: 11px/14px 'DejaVu Sans Condensed', 'DejaVu Sans', sans-serif;
  }
  .floating {
    --push: 71px;
    --wide: 122px;
    position: absolute;
    top: 211px;
    left: 59px;
    right: 75px;
    border: solid #0a46d8;
    border-width: 0 3px 3px;
    border-radius: 8px 8px 0 0;
  }
  .docked {
    --push: 69px;
    --wide: 118px;
    max-width: 668px;
    margin-top: 132px;
  }
  .dialog-title {
    display: flex;
    align-items: center;
    justify-content: space-between;
    height: 24px;
    padding: 2px 0 0 2px;
    background: linear-gradient(#0a4fd6, #0054e8 20%, #0058f0 60%, #0066ff 85%, #0048d0);
    color: #fff;
    text-shadow: 1px 1px #0a2f80;
  }
  .floating .dialog-title {
    height: 28px;
    margin: 0 -3px;
    padding: 3px 5px 0 6px;
    border-radius: 7px 7px 0 0;
  }
  .dialog-title h2 {
    font: bold 13px/20px 'Liberation Mono', monospace;
  }
  .close {
    width: 20px;
    height: 20px;
    border: 1px solid #fff;
    border-radius: 3px;
    background: linear-gradient(135deg, #ee9070, #d8452a 50%, #b83418);
  }
  .body {
    display: grid;
    grid-template-columns: 224px minmax(0, 1fr);
    gap: 8px;
    padding: 8px 8px 0;
  }
  .docked .body {
    grid-template-columns: 218px minmax(0, 1fr);
    padding: 8px 6px 0;
  }
  .stack {
    display: flex;
    flex-direction: column;
    gap: 13px;
  }
  .right {
    display: flex;
    flex-direction: column;
  }
  .panel {
    background: #fff;
    box-shadow: inset 0 0 0 1px #d4d1c8;
  }
  .panel-head {
    display: flex;
    align-items: center;
    justify-content: space-between;
    height: 23px;
    padding: 2px 12px 0 3px;
    background: #d6d3ca;
  }
  .docked .panel-head {
    height: 22px;
  }
  .scroller {
    display: flex;
    height: 328px;
    overflow: hidden;
  }
  .list {
    flex: 1;
    padding: 0 7px 0 5px;
  }
  .category {
    position: relative;
    display: flex;
    align-items: flex-end;
    gap: 4px;
    height: 23px;
    padding: 0 13px 0 1px;
    border-bottom: 1px solid #2a62b8;
    font-size: 11px;
    line-height: 13px;
  }
  .category:first-child {
    height: 20px;
  }
  .category span:first-of-type {
    flex: 1;
  }
  .category.open, .blue {
    color: #00007c;
  }
  .caret {
    align-self: center;
    border: 3px solid transparent;
    border-top-color: #000;
    border-bottom: 0;
  }
  .caret.up {
    border-top: 0;
    border-bottom: 3px solid #000;
  }
  .ring-line {
    top: -3px;
    left: -4px;
    width: 80px;
    height: 29px;
  }
  .thumbs {
    display: grid;
    grid-template-columns: repeat(3, 58px);
    justify-content: space-between;
    gap: 8px;
    padding-top: 8px;
  }
  .thumb {
    height: 53px;
    border: 1px solid #1c1c70;
    background: #fff;
  }
  .thumb svg {
    width: 100%;
  }
  .thumb.selected {
    border-color: #d02828;
    outline: 2px solid #3a6cb4;
    outline-offset: 1px;
  }
  .docked .list {
    padding: 0 6px;
  }
  .docked .thumbs {
    grid-template-columns: repeat(3, 57px);
    padding: 7px 4px 6px 2px;
  }
  .docked .thumb {
    height: 52px;
  }
  .docked .thumb.selected {
    outline-offset: 3px;
  }
  .docked .schemes .thumbs {
    padding-top: 4px;
    padding-bottom: 4px;
  }
  .more {
    height: 21px;
    padding: 4px 5px 0 0;
    border: 1px solid #d4d1c8;
    border-top: 0;
    background: #ece9d8;
    text-align: right;
  }
  .more a {
    color: #3a62b4;
    font-size: 10px;
    font-weight: 700;
    text-decoration: none;
  }
  .track {
    display: flex;
    flex-direction: column;
    width: 16px;
    border-left: 1px solid #d8dcec;
    background: #f6f6fb;
  }
  .track button {
    height: 15px;
    border: 1px solid #a9bdf0;
    border-radius: 2px;
    background: #c6d5fb;
  }
  .track button:last-child {
    margin-top: auto;
  }
  .handle {
    height: 208px;
    margin-top: 1px;
    border: 1px solid #a9bdf0;
    border-radius: 2px;
    background:
      repeating-linear-gradient(#f4f7ff 0 1px, #9fb4ec 1px 2px, transparent 2px 3px) center / 6px 9px no-repeat,
      linear-gradient(90deg, #cbd8fc, #b9cbf8);
  }
  .preview {
    display: flex;
    height: 233px;
    padding-right: 2px;
    border: 1px solid #b0aea6;
    border-right-color: #d8d6ce;
    background: #fff;
  }
  .docked .preview {
    height: 227px;
    padding-right: 3px;
  }
  .plot {
    flex: 1 1 0;
    min-width: 0;
    font: 12px 'Liberation Sans', sans-serif;
    shape-rendering: crispEdges;
  }
  .legend {
    display: grid;
    grid-template-rows: repeat(15, minmax(0, 1fr));
    grid-auto-rows: 3px;
    width: 75px;
    height: 221px;
    margin-top: 7px;
    padding-left: 4px;
    overflow: hidden;
    border: 1px solid #000;
    background: #fff;
    font: 12px/14px 'Liberation Sans', sans-serif;
    list-style: none;
  }
  .docked .legend {
    width: 87px;
    height: 214px;
  }
  .legend li {
    display: flex;
    align-items: center;
    gap: 1px;
    height: 14px;
  }
  .legend i {
    width: 10px;
    height: 10px;
    border: 1px solid #000;
  }
  .legend.lines i {
    width: 24px;
    height: 1px;
    border: 0;
  }
  .history-label {
    display: flex;
    align-items: center;
    gap: 6px;
    height: 23px;
    padding-top: 5px;
    color: #3a5cc0;
  }
  .docked .history-label {
    height: 22px;
  }
  .history-label::after {
    content: '';
    flex: 1;
    height: 1px;
    background: #c8c8c8;
  }
  .history {
    display: flex;
    height: 95px;
    border: 1px solid #d0cec6;
  }
  .docked .history {
    height: 94px;
  }
  .scroll {
    width: 10px;
    border-right: 1px solid #aca899;
    background: #ece9d8;
  }
  .scroll::before {
    content: '';
    display: block;
    width: 0;
    margin: auto;
    border: 4px solid transparent;
    border-left-width: 0;
    border-right-color: #000;
  }
  .scroll.next {
    margin-left: auto;
    border-right: 0;
    border-left: 1px solid #aca899;
  }
  .scroll.next::before {
    border-left: 4px solid #000;
    border-right: 0;
  }
  .history-item {
    align-self: center;
    margin-left: 7px;
  }
  .history-item.framed {
    margin-left: 3px;
    padding: 3px;
    border: 1px solid #3a6cb4;
  }
  .mini {
    width: 128px;
    height: 82px;
    border: 1px solid #000;
    font: bold 5px 'Liberation Sans', sans-serif;
    shape-rendering: crispEdges;
  }
  .framed .mini {
    width: 124px;
    height: 80px;
  }
  .actions {
    display: flex;
    gap: 8px;
    margin-top: 8px;
    padding: 11px 8px 9px;
    border-top: 1px solid #aaa89f;
  }
  .docked .actions {
    padding: 10px 7px;
  }
  .spacer {
    flex: 1;
  }
  .push {
    position: relative;
    width: var(--push);
    height: 20px;
    border: 1px solid #1c4a78;
    border-radius: 3px;
    background: linear-gradient(#fff, #eceae4);
    white-space: nowrap;
  }
  .push.wide {
    width: var(--wide);
  }
  .push:disabled {
    border-color: #c9c7ba;
    background: #f3f1e8;
    color: #a5a393;
  }
  .push.default {
    box-shadow: inset 0 0 0 2px #a9c4f4;
  }
  .ring-next {
    inset: -11px -11px -10px;
  }

  /* page footer */
  .contact {
    margin-top: 162px;
    color: #444;
  }
  .contact p {
    display: flex;
    justify-content: space-between;
    padding: 0 2px 0 3px;
    white-space: nowrap;
  }
  .contact .zh {
    font: 13px/24px 'Noto Sans CJK SC', sans-serif;
  }
  .contact .en {
    font: 9px/20px Lato, sans-serif;
  }
  .strip {
    height: 13px;
    background: #e2e2e2;
  }
</style>
